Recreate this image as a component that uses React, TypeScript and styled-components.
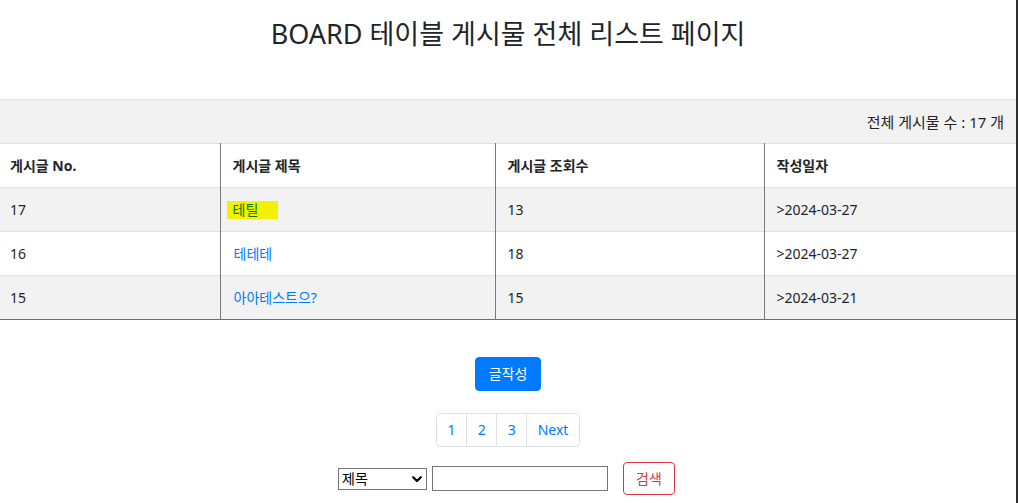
import React from "react";
import styled, { createGlobalStyle } from "styled-components";

const GlobalStyle = createGlobalStyle`
  html, body { margin: 0; padding: 0; background: #fff; }
  body {
    font-family: "Noto Sans", "Noto Sans CJK KR", sans-serif;
    font-size: 14px;
    color: #212529;
  }
  * { box-sizing: border-box; }
`;

const Page = styled.div`
  width: 1018px;
  min-height: 503px;
  border-right: 2px solid #2f2f2f;
  display: flex;
  flex-direction: column;
  align-items: center;
  overflow: hidden;
`;

const Title = styled.h1`
  margin: 18px 0 50px;
  font-size: 27px;
  line-height: 31px;
  font-weight: 400;
  text-align: center;
  color: #212529;
  font-family: "Noto Sans", "Noto Sans CJK KR", sans-serif;
`;

const Table = styled.table`
  width: 100%;
  border-collapse: collapse;
  table-layout: fixed;
  border-bottom: 1px solid #6e6e6e;
`;

const Row = styled.tr<{ $shade?: boolean }>`
  background: ${(p) => (p.$shade ? "#f2f2f2" : "#ffffff")};
`;

const CountCell = styled.td`
  text-align: right;
  padding: 12px 12px 11px;
  line-height: 20px;
  font-size: 15px;
  border-top: 1px solid #dee2e6;
  color: #212529;
`;

const Cell = styled.td<{ $first?: boolean; $last?: boolean }>`
  padding: 12px 12px 11px ${(p) => (p.$first ? "10px" : "12px")};
  line-height: 20px;
  border-top: 1px solid #dee2e6;
  border-right: ${(p) => (p.$last ? "none" : "1px solid #7a7a7a")};
  text-align: left;
  vertical-align: middle;
  white-space: nowrap;
`;

const HeadCell = styled(Cell).attrs({ as: "th" })`
  font-weight: 700;
`;

const TitleLink = styled.a`
  color: #007bff;
  text-decoration: none;
  padding-left: 1px;
`;

const Marked = styled.span`
  display: inline-block;
  background: #f2f200;
  color: #007b00;
  padding: 0 20px 0 6px;
  margin-left: -7px;
  line-height: 18px;
`;

const WriteButton = styled.button`
  margin-top: 37px;
  padding: 6px 13px;
  font-family: inherit;
  font-size: 14px;
  line-height: 20px;
  color: #fff;
  background: #007bff;
  border: 1px solid #007bff;
  border-radius: 4px;
  cursor: pointer;
`;

const Pager = styled.ul`
  display: flex;
  list-style: none;
  margin: 22px 0 0;
  padding: 0;
`;

const PageItem = styled.li`
  margin-left: -1px;
  &:first-child { margin-left: 0; }
  &:first-child a { border-radius: 4px 0 0 4px; }
  &:last-child a { border-radius: 0 4px 4px 0; }
`;

const PageLink = styled.a`
  display: block;
  padding: 6px 10.5px;
  line-height: 20px;
  font-size: 14px;
  color: #007bff;
  text-decoration: none;
  border: 1px solid #dee2e6;
  background: #fff;
`;

const SearchRow = styled.form`
  display: flex;
  align-items: center;
  margin: 15px 0 0;
  padding-right: 3px;
`;

const SelectWrap = styled.div`
  position: relative;
  width: 89px;
  height: 22px;
`;

const Select = styled.select`
  appearance: none;
  -webkit-appearance: none;
  width: 89px;
  height: 22px;
  border: 1px solid #767676;
  border-radius: 0;
  background: #fff;
  font-family: "Noto Sans", "Noto Sans CJK KR", sans-serif;
  font-size: 14px;
  line-height: 20px;
  padding: 0 0 0 3px;
  color: #000;
`;

const Chevron = styled.svg`
  position: absolute;
  right: 5px;
  top: 8px;
  pointer-events: none;
`;

const SearchInput = styled.input`
  margin-left: 5px;
  width: 176px;
  height: 25px;
  border: 1px solid #767676;
  border-radius: 0;
  padding: 1px 2px;
  font-size: 14px;
`;

const SearchButton = styled.button`
  margin-left: 15px;
  padding: 6px 12px;
  font-family: inherit;
  font-size: 14px;
  line-height: 19px;
  color: #dc3545;
  background: #fff;
  border: 1px solid #dc3545;
  border-radius: 4px;
`;

const posts = [
  { no: 17, title: "테틸", views: 13, date: ">2024-03-27", marked: true },
  { no: 16, title: "테테테", views: 18, date: ">2024-03-27" },
  { no: 15, title: "아아테스트으?", views: 15, date: ">2024-03-21" },
];

export default function App() {
  return (
    <>
      <GlobalStyle />
      <Page>
        <Title>BOARD 테이블 게시물 전체 리스트 페이지</Title>
        <Table>
          <colgroup>
            <col style={{ width: 220 }} />
            <col style={{ width: 275 }} />
            <col style={{ width: 269 }} />
            <col />
          </colgroup>
          <tbody>
            <Row $shade>
              <CountCell colSpan={4}>전체 게시물 수 : 17 개</CountCell>
            </Row>
            <Row>
              <HeadCell $first>게시글 No.</HeadCell>
              <HeadCell>게시글 제목</HeadCell>
              <HeadCell>게시글 조회수</HeadCell>
              <HeadCell $last>작성일자</HeadCell>
            </Row>
            {posts.map((p, i) => (
              <Row key={p.no} $shade={i % 2 === 0}>
                <Cell $first>{p.no}</Cell>
                <Cell>
                  <TitleLink href="#">
                    {p.marked ? <Marked>{p.title}</Marked> : p.title}
                  </TitleLink>
                </Cell>
                <Cell>{p.views}</Cell>
                <Cell $last>{p.date}</Cell>
              </Row>
            ))}
          </tbody>
        </Table>
        <WriteButton type="button">글작성</WriteButton>
        <Pager>
          {["1", "2", "3", "Next"].map((t) => (
            <PageItem key={t}>
              <PageLink href="#">{t}</PageLink>
            </PageItem>
          ))}
        </Pager>
        <SearchRow onSubmit={(e) => e.preventDefault()}>
          <SelectWrap>
            <Select defaultValue="title">
              <option value="title">제목</option>
              <option value="content">내용</option>
              <option value="writer">작성자</option>
            </Select>
            <Chevron width="10" height="7" viewBox="0 0 10 7">
              <path d="M1.2 1.2 L5 5 L8.8 1.2" fill="none" stroke="#000" strokeWidth="2.2" strokeLinecap="round" strokeLinejoin="round" />
            </Chevron>
          </SelectWrap>
          <SearchInput type="text" />
          <SearchButton type="submit">검색</SearchButton>
        </SearchRow>
      </Page>
    </>
  );
}
